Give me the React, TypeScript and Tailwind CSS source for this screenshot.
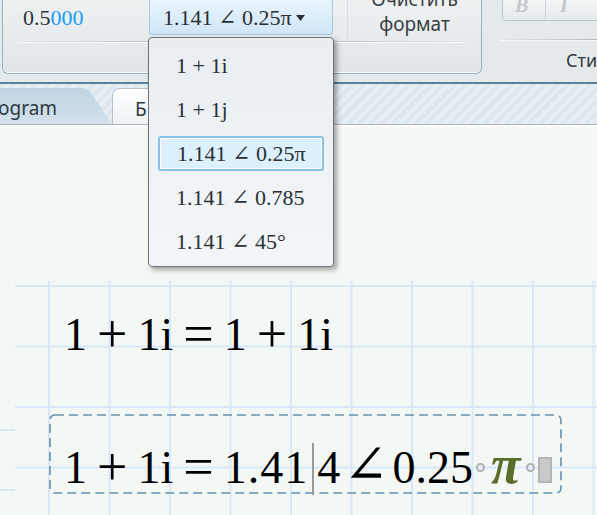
import React from 'react';

const MATH = "font-['Liberation_Serif','DejaVu_Serif',serif]";
const SANS = "font-['Noto_Sans','Open_Sans',sans-serif]";

const options = ['1 + 1i', '1 + 1j', '1.141 ∠ 0.25π', '1.141 ∠ 0.785', '1.141 ∠ 45°'];

const Op: React.FC<{ children: React.ReactNode }> = ({ children }) => (
  <span className="mx-[10px] text-[54px] relative top-[2px]">{children}</span>
);

const Ribbon: React.FC = () => (
  <div className="h-[82px] flex bg-[#e4e9eb]">
    {/* format group */}
    <div className="ml-[2px] w-[488px] h-[74px] flex flex-col rounded-b-[6px] border border-t-0 border-[#93b2c6] bg-gradient-to-b from-[#eef1f2] to-[#dfe5e7] shadow-[inset_0_-1px_0_#ffffff]">
      <div className="h-[41px] flex">
        <div className={`w-[146px] h-[35px] flex items-center pl-[20px] text-[22px] text-[#2f3336] ${MATH}`}>
          0.5<span className="text-[#1b9cf2]">000</span>
        </div>
        <div className={`w-[184px] h-[35px] flex items-center pl-[13px] rounded-b-[3px] border border-t-0 border-[#a8c7dd] bg-gradient-to-b from-[#e9f4fc] to-[#cfe6f7] text-[22px] text-[#2b2f33] ${MATH}`}>
          <span className="whitespace-nowrap">1.141 ∠ 0.25π</span>
          <svg width="9" height="6" viewBox="0 0 9 6" className="ml-[4px] mt-[2px]">
            <path d="M0 0h9L4.5 6z" fill="#2b2f33" />
          </svg>
        </div>
        <div className="w-[14px]" />
        <div className={`w-[134px] h-[41px] flex flex-col items-center border-l border-[#d7dde0] text-[19px] leading-[24px] text-[#3a3f44] ${SANS}`}>
          <span className="-mt-[13px]">Очистить</span>
          <span className="mt-[1px]">формат</span>
        </div>
      </div>
      <div className="h-px mx-[14px] bg-gradient-to-r from-[#e2e6e8] via-[#a9b0b4] to-[#e2e6e8]" />
      <div className="h-px mx-[14px] bg-white/70" />
      <div className="flex-1" />
    </div>
    {/* style group */}
    <div className="ml-[3px] flex-1 h-[74px] flex flex-col">
      <div className="h-[41px] pl-[17px]">
        <div className={`h-[21px] flex rounded-bl-[4px] border border-t-0 border-[#b7c9d5] bg-gradient-to-b from-[#f3f5f6] to-[#e6eaec] text-[20px] font-bold italic text-[#c3c8cb] ${MATH}`}>
          <div className="w-[43px] border-r border-[#c9d3d9] leading-[10px] pl-[12px] overflow-hidden">B</div>
          <div className="flex-1 leading-[10px] pl-[14px] overflow-hidden">I</div>
        </div>
      </div>
      <div className="h-px ml-[14px] bg-gradient-to-r from-[#e2e6e8] to-[#a9b0b4]" />
      <div className="h-px ml-[14px] bg-white/70" />
      <div className={`flex-1 pl-[81px] pt-[6px] text-[18px] text-[#34393d] whitespace-nowrap ${SANS}`}>
        Стиль
      </div>
    </div>
  </div>
);

const Tabs: React.FC = () => (
  <>
    <div className="h-[2px] bg-[#5a7f99]" />
    <div className="h-[40px] flex items-end bg-[repeating-linear-gradient(135deg,#dde7ee_0px,#dde7ee_4px,#e7eef3_4px,#e7eef3_8px)]">
      <div className={`w-[112px] h-[36px] flex items-center bg-gradient-to-b from-[#bfd4e3] to-[#d3e2ec] [clip-path:polygon(0_0,74%_0,80%_8%,100%_100%,0_100%)] text-[19px] text-[#2e3a44] ${SANS}`}>
        <span className="-ml-[2px] mt-[5px]">ogram</span>
      </div>
      <div className={`w-[60px] h-[36px] flex items-center pl-[22px] rounded-tl-[7px] border border-b-0 border-[#b6c2ca] bg-gradient-to-b from-[#ffffff] to-[#eef2f4] text-[19px] text-[#2e3a44] ${SANS}`}>
        <span className="mt-[5px]">Б</span>
      </div>
    </div>
    <div className="h-px bg-[#aeb7bd]" />
    <div className="h-[3px] bg-gradient-to-b from-[#ffffff] to-[#f4f8f5]" />
  </>
);

const Dropdown: React.FC = () => (
  <div className={`absolute left-[148px] top-[37px] w-[186px] h-[230px] pt-[5px] rounded-[4px] border border-[#6e7479] bg-gradient-to-b from-[#e8eef2] to-[#f3f6f8] shadow-[3px_3px_5px_rgba(0,0,0,0.35)] text-[22px] text-[#2b3034] ${MATH}`}>
    {options.map((o, i) =>
      i === 2 ? (
        <div key={o} className="h-[44px] px-[9px] flex items-center">
          <div className="w-full h-[35px] flex items-center pl-[17px] rounded-[3px] border-2 border-[#88c2e7] bg-[#dcf0fd] shadow-[inset_0_0_0_1px_#ffffff] whitespace-nowrap">
            {o}
          </div>
        </div>
      ) : (
        <div key={o} className="h-[44px] flex items-center pl-[27px] whitespace-nowrap">
          {o}
        </div>
      )
    )}
  </div>
);

const Ring: React.FC<{ className?: string }> = ({ className = '' }) => (
  <span className={`relative -top-[11px] w-[9px] h-[9px] rounded-full border-2 border-[#b0b0b0] ${className}`} />
);

const Worksheet: React.FC = () => (
  <div className="flex-1 relative bg-[#f4f8f5]">
    <div className="absolute left-[15px] top-[153px] right-0 bottom-0 bg-[linear-gradient(to_right,#d8e8f8_2px,transparent_2px),linear-gradient(to_bottom,#d8e8f8_2px,transparent_2px)] bg-[size:60.5px_60.5px] bg-[position:33px_4px]" />
    <div className="absolute left-0 top-[301px] w-[15px] h-[2px] bg-[#d8e8f8]" />
    <div className="absolute left-0 top-[361px] w-[15px] h-[2px] bg-[#d8e8f8]" />

    <div className={`absolute left-[64px] top-[181px] flex items-baseline text-[46px] leading-[46px] text-black ${MATH}`}>
      <span>1</span><Op>+</Op><span>1i</span><Op>=</Op><span>1</span><Op>+</Op><span>1i</span>
    </div>

    <div className="absolute left-[49px] top-[286px] w-[513px] h-[80px]">
      <svg className="absolute inset-0" width="513" height="80">
        <rect x="1" y="1" width="511" height="78" rx="5" fill="none" stroke="#6790ae" strokeWidth="1.6" strokeDasharray="9 5" />
      </svg>
      <div className={`relative pl-[15px] pt-[17px] flex items-baseline text-[46px] leading-[46px] text-black ${MATH}`}>
        <span>1</span><Op>+</Op><span>1i</span><Op>=</Op>
        <span className="tracking-[1px]">1.41</span>
        <span className="relative top-[12px] w-[2px] h-[52px] ml-[4px] mr-[3px] bg-[#9a9a9a]" />
        <span>4</span>
        <span className="ml-[3px] mr-[4px] text-[54px]">∠</span>
        <span>0.25</span>
        <Ring className="ml-[3px]" />
        <span className="mx-[6px] text-[54px] font-bold italic text-[#5a6e2b]">π</span>
        <Ring />
        <span className="ml-[3px] w-[14px] h-[26px] bg-[#c9c9c9] border-2 border-[#b3b3b3]" />
      </div>
    </div>
  </div>
);

export default function App() {
  return (
    <div className="relative w-[597px] h-[515px] overflow-hidden flex flex-col bg-[#f4f8f5]">
      <Ribbon />
      <Tabs />
      <Worksheet />
      <Dropdown />
    </div>
  );
}
